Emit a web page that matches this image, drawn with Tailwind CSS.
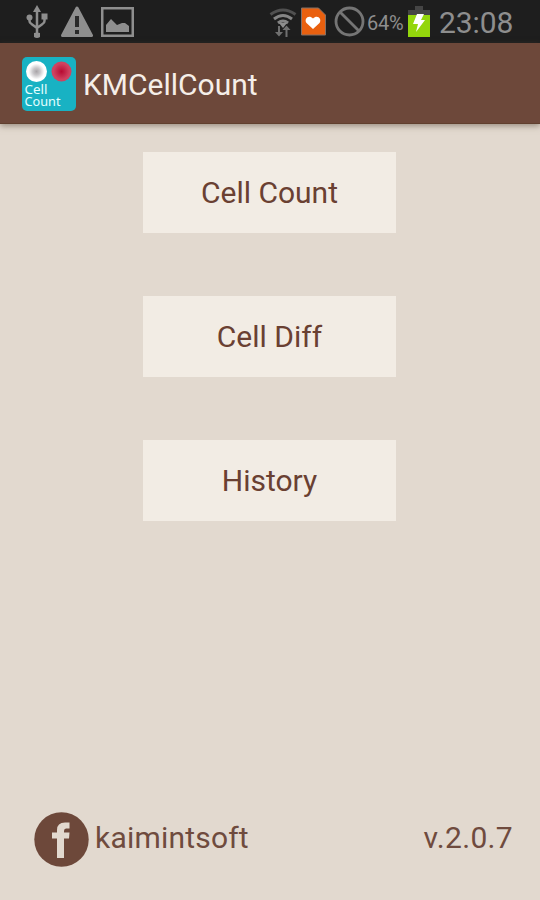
<!DOCTYPE html>
<html lang="en">
<head>
  <meta charset="UTF-8" />
  <meta name="viewport" content="width=device-width, initial-scale=1" />
  <title>KMCellCount</title>
  <script src="https://cdn.jsdelivr.net/npm/@tailwindcss/browser@4"></script>
</head>
<body class="bg-[#e2d9cf] font-['Roboto',sans-serif]">
  <div class="w-[540px] h-[900px] flex flex-col overflow-hidden">

    <!-- status bar -->
    <div class="h-[43px] shrink-0 bg-[#1e1e1e] flex items-center justify-between pl-[26px] pr-[27px] text-[#8e8e8e]">
      <div class="flex items-center">
        <svg class="w-[22px] h-[34px]" viewBox="0 0 22 34" fill="none" stroke="#8e8e8e" stroke-width="2.500">
          <path d="M11 5v26M3.500 13v3q0 2 2 3l5.500 4M18.500 13v3q0 2-2 3L11 23" />
          <path d="M11 0l4 7H7z" fill="#8e8e8e" stroke="none" />
          <circle cx="3.500" cy="12.500" r="3" fill="#8e8e8e" stroke="none" />
          <path d="M15.500 8.500h6v6h-6zM8 28q3-1 6 0v4q-3 2-6 0z" fill="#8e8e8e" stroke="none" />
        </svg>
        <svg class="ml-[12px] w-[34px] h-[32px]" viewBox="0 0 34 32">
          <path d="M17 2L31.500 29.500h-29z" fill="#8e8e8e" stroke="#8e8e8e" stroke-width="3" stroke-linejoin="round" />
          <path d="M15 10h4v11h-4zM15 24h4v4h-4z" fill="#2a2a2a" />
        </svg>
        <svg class="ml-[7px] mt-px w-[33px] h-[30px]" viewBox="0 0 33 30">
          <path d="M1.250 1.250h30.500v27.500H1.250z" fill="none" stroke="#8e8e8e" stroke-width="2.500" />
          <path d="M5 25v-7l5-6 6 6 5-2 3 0 4 3v6z" fill="#8e8e8e" />
        </svg>
      </div>
      <div class="flex items-center">
        <svg class="w-[28px] h-[32px]" viewBox="0 0 28 32" fill="none" stroke-width="3">
          <path d="M1.500 8.500q12.500-9 25 0" stroke="#505050" />
          <path d="M5 13q9-7 18 0M9 17q5-4 10 0" stroke="#858585" />
          <path d="M10 17h8L14 22z" fill="#8e8e8e" />
          <path d="M10 20v9M17.500 31v-10" stroke="#707070" stroke-width="2" />
          <path d="M6 26h8l-4 4.500zM13.500 24h8l-4-4.500z" fill="#707070" />
        </svg>
        <svg class="ml-[4px] w-[25px] h-[29px]" viewBox="0 0 25 29">
          <path d="M.5 1h17l7 7v20H.5z" fill="#e9600f" stroke="#837066" />
          <path d="M12 22L5.500 16C2.500 11.500 8 7 12 11.500C16 7 21.500 11.500 18.500 16z" fill="#fff" />
        </svg>
        <svg class="ml-[8px] w-[31px] h-[31px]" viewBox="0 0 31 31" fill="none" stroke="#757575" stroke-width="2.800">
          <circle cx="15.500" cy="15.500" r="13.500" />
          <path d="M6 6l19 19" />
        </svg>
        <span class="ml-[2px] mt-[3px] w-[37px] text-[20px] leading-none tracking-[-0.2px] whitespace-nowrap">64%</span>
        <svg class="ml-[4px] w-[22px] h-[31px]" viewBox="0 0 22 31">
          <path d="M7 0h8v4h7v6H0V4h7z" fill="#454545" />
          <path d="M0 9h22v22H0z" fill="#93d60c" />
          <path d="M9 8h7l-3 6h4L8 26l2-8H5z" fill="#fff" />
        </svg>
        <span class="ml-[9px] mt-[2px] w-[74px] text-[30px] leading-none tracking-[-0.1px] whitespace-nowrap">23:08</span>
      </div>
    </div>

    <!-- action bar -->
    <div class="relative h-[81px] shrink-0 bg-[#6d483a] border-b border-[#60402f] flex items-center pt-[2px] pl-[22px] shadow-[0_2px_6px_rgba(80,65,50,0.5)]">
      <svg class="w-[54px] h-[54px]" viewBox="0 0 54 54">
        <defs>
          <radialGradient id="white-cell">
            <stop offset="0" stop-color="#aaa5a8" />
            <stop offset=".35" stop-color="#c9c7ca" />
            <stop offset=".75" stop-color="#fff" />
          </radialGradient>
          <radialGradient id="red-cell">
            <stop offset="0" stop-color="#b80a32" />
            <stop offset=".8" stop-color="#cf4260" />
          </radialGradient>
        </defs>
        <rect width="54" height="54" rx="5" fill="#18b2c3" />
        <circle cx="14.500" cy="14.500" r="10.500" fill="url(#white-cell)" />
        <circle cx="39.500" cy="14.500" r="10" fill="url(#red-cell)" />
        <text x="2.500" y="37" font-family="Noto Sans, sans-serif" font-size="13" textLength="23" lengthAdjust="spacingAndGlyphs" fill="#e4ffff">Cell</text>
        <text x="2.500" y="48.500" font-family="Noto Sans, sans-serif" font-size="13" textLength="36" lengthAdjust="spacingAndGlyphs" fill="#e4ffff">Count</text>
      </svg>
      <h1 class="ml-[7px] mt-px text-[30px] leading-none text-[#f5eee8] whitespace-nowrap">KMCellCount</h1>
    </div>

    <!-- menu -->
    <div class="flex-1 flex flex-col items-center gap-[63px] pt-[28px] pr-px text-[30px] text-[#6a4032]">
      <button class="w-[253px] h-[81px] bg-[#f2ece4]">Cell Count</button>
      <button class="w-[253px] h-[81px] bg-[#f2ece4]">Cell Diff</button>
      <button class="w-[253px] h-[81px] bg-[#f2ece4]">History</button>
    </div>

    <!-- footer -->
    <div class="flex items-center justify-between pl-[34px] pr-[27px] pb-[33px] text-[30px] leading-none text-[#6f4b3e]">
      <div class="flex items-center">
        <svg class="w-[55px] h-[55px]" viewBox="0 0 55 55">
          <circle cx="27.500" cy="27.500" r="27.200" fill="#6d483a" />
          <path d="M23 46V26.500H18v-6h5v-2.500q0-7.500 8-7.500h4.500v6H32q-2 0-2 2.500v1.500h5.500l-.5 6h-5V46z" fill="#e2d9cf" />
        </svg>
        <span class="ml-[6px] mb-[4px] tracking-[0.2px]">kaimintsoft</span>
      </div>
      <span class="mb-[4px] tracking-[0.3px]">v.2.0.7</span>
    </div>
  </div>
</body>
</html>
